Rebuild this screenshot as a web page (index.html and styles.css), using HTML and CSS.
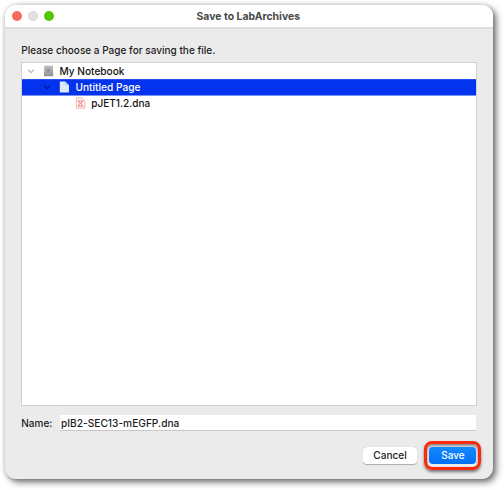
FILE: index.html
```
<!DOCTYPE html>
<html lang="en">
<head>
<meta charset="utf-8">
<title>Save to LabArchives</title>
<link rel="stylesheet" href="styles.css">
</head>
<body>
<main class="window">
  <header class="titlebar">
    <div class="lights"><i class="close"></i><i class="minimize"></i><i class="expand"></i></div>
    <h1><svg class="fit" width="106" height="16"><text x="0.5" y="12" textLength="103.5" lengthAdjust="spacingAndGlyphs">Save to LabArchives</text></svg></h1>
  </header>
  <section class="content">
    <p class="prompt"><svg class="fit" width="200" height="16"><text x="0.3" y="12" textLength="194" lengthAdjust="spacingAndGlyphs">Please choose a Page for saving the file.</text></svg></p>
    <div class="tree">
      <div class="row">
        <svg class="chevron" viewBox="0 0 8 8"><path d="M1.2 2.7 4 5.6 6.8 2.7"/></svg>
        <svg class="icon drive" viewBox="0 0 12 12">
          <defs><linearGradient id="metal" x2="0" y2="1"><stop stop-color="#bcbcbc"/><stop offset="1" stop-color="#999"/></linearGradient></defs>
          <path fill="url(#metal)" d="M1.8.8h8.6l.3 8.4H1.5z"/><path fill="#868686" d="M1.5 9.2h9.2v2H1.5z"/><circle cx="6" cy="5.4" r="1.4" fill="#8b8b8b"/><path stroke="#b3b3b3" stroke-width=".5" d="M3 10.2h6"/>
        </svg>
        <svg class="fit" width="100" height="16"><text x="0.5" y="12" textLength="65" lengthAdjust="spacingAndGlyphs">My Notebook</text></svg>
      </div>
      <div class="row child selected">
        <svg class="chevron" viewBox="0 0 8 8"><path d="M1.2 2.7 4 5.6 6.8 2.7"/></svg>
        <svg class="icon" viewBox="0 0 12 12"><path fill="#e0e9fc" d="M.8.5h5.4l3.8 3.7v7.3H.8z"/><path fill="#b5c9f4" d="M6.2.5v3.7H10z"/></svg>
        <svg class="fit" width="100" height="16"><text x="0.5" y="12" textLength="65" lengthAdjust="spacingAndGlyphs">Untitled Page</text></svg>
      </div>
      <div class="row grandchild">
        <svg class="icon" viewBox="0 0 12 12"><path fill="#fff5f4" stroke="#f2aaa7" stroke-width=".8" d="M2.3.9h5.5l3 3v7.3H2.3z"/><path fill="none" stroke="#ed7672" stroke-width=".9" d="M4 3.5c0 2.8 5 2.8 5 6M9 3.5c0 2.8-5 2.8-5 6M4.1 4h4.5M4.1 9h4.8"/></svg>
        <svg class="fit" width="100" height="16"><text x="1.2" y="12" textLength="59" lengthAdjust="spacingAndGlyphs">pJET1.2.dna</text></svg>
      </div>
    </div>
    <div class="name-row">
      <label><svg class="fit" width="36" height="16"><text x="0.3" y="11.8" textLength="31" lengthAdjust="spacingAndGlyphs">Name:</text></svg></label>
      <div class="field"><svg class="fit" width="130" height="16"><text x="0" y="11.8" textLength="118.3" lengthAdjust="spacingAndGlyphs">pIB2-SEC13-mEGFP.dna</text></svg></div>
    </div>
    <footer>
      <button class="cancel"><svg class="fit" width="34" height="16"><text x="0.3" y="12" textLength="33.5" lengthAdjust="spacingAndGlyphs">Cancel</text></svg></button>
      <div class="highlight"><button class="save"><svg class="fit" width="24" height="16"><text x="0.3" y="12" textLength="23.3" lengthAdjust="spacingAndGlyphs">Save</text></svg></button></div>
    </footer>
  </section>
</main>
</body>
</html>
```
FILE: styles.css
```
* { box-sizing: border-box; }
html, body { height: 100%; overflow: hidden; }
body {
  margin: 0;
  padding: 5px 11px 11px 5px;
  background: #fff;
  color: #1c1c1c;
  font: 450 10.7px/16px Inter, "Liberation Sans", sans-serif;
}
.window {
  height: 474px;
  display: flex;
  flex-direction: column;
  border-radius: 11px;
  background: #ebebeb;
  box-shadow: 3px 3px 7px rgba(0, 0, 0, .58), 0 0 4px rgba(0, 0, 0, .16);
}
.titlebar {
  height: 24px;
  flex: none;
  display: grid;
  grid-template-columns: 1fr auto 1fr;
  align-items: center;
  padding: 0 6.5px 0;
  background: #fff;
  border-bottom: 2px solid #dfdfdf;
  border-radius: 11px 11px 0 0;
}
.lights { display: flex; gap: 6px; }
.lights i { width: 10px; height: 10px; border-radius: 50%; }
.close { background: #f66c58; }
.minimize { background: #e3e3e3; border: 1px solid #d8d8d8; }
.expand { background: #54c500; }
h1 { margin: 0; height: 16px; font-size: 10.7px; font-weight: 650; color: #484848; }
.fit { display: block; flex: none; fill: currentColor; overflow: visible; }
.content { display: flex; flex-direction: column; padding: 13px 16px 0; }
.prompt { margin: 0 0 4px; height: 16px; }
.tree {
  height: 344px;
  border: 1px solid #d0d0d0;
  background: #fff;
}
.row { height: 16px; display: flex; align-items: center; padding-left: 5px; color: #111; }
.child { padding-left: 21px; }
.grandchild { padding-left: 52px; }
.selected { background: #0433ee; color: #fff; box-shadow: inset 0 1px #2850f0, 0 1px #7893f4; }
.chevron { width: 8px; height: 8px; margin-right: 8px; fill: none; stroke: #b5b5b5; stroke-width: 1.2; }
.selected .chevron { stroke: #00129c; }
.icon { width: 12px; height: 12px; margin-right: 4px; }
.drive { transform: translateX(-.5px); }
.name-row { display: flex; height: 16px; margin-top: 9px; }
label { width: 38.6px; flex: none; }
.field { flex: 1; height: 16px; background: #fff; border-bottom: 1px solid #c8c8c8; padding-left: 1px; margin-right: 1px; }
footer { display: flex; justify-content: flex-end; align-items: center; gap: 7px; height: 30px; margin: 9px -4px 0 0; }
button { display: flex; justify-content: center; align-items: center; height: 17px; padding: 0; border: 0; border-radius: 4px; font: inherit; }
.cancel { width: 54px; background: #fff; color: #222; box-shadow: 0 .5px 1px #aaa; }
.highlight { width: 57px; height: 29px; padding: 3px 2px; border: 3px solid #fc2a0c; border-radius: 8px; box-shadow: 0 2px 3px #777, inset 0 2px 3px #888; }
.save { width: 47px; background: linear-gradient(#1689ff, #0070f5); color: #fff; }
```
